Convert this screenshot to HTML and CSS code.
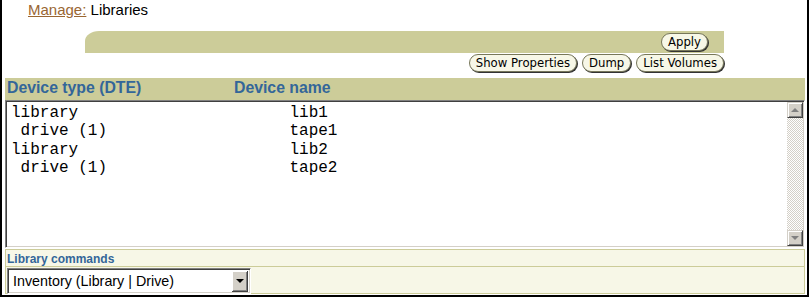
FILE: index.html
```html
<!DOCTYPE html>
<html lang="en">
<head>
    <meta charset="UTF-8">
    <title>Manage: Libraries</title>
    <link rel="stylesheet" href="styles.css">
</head>
<body>
    <div class="frame">
        <div class="title"><a href="#">Manage:</a> Libraries</div>

        <div class="apply-bar">
            <button class="btn">Apply</button>
        </div>
        <div class="actions">
            <button class="btn">Show Properties</button>
            <button class="btn">Dump</button>
            <button class="btn">List Volumes</button>
        </div>

        <div class="devices">
            <div class="col-head">
                <span class="col-type">Device type (DTE)</span>
                <span>Device name</span>
            </div>
            <div class="listbox">
                <div class="rows">
                    <div class="row">library                      lib1</div>
                    <div class="row"> drive (1)                   tape1</div>
                    <div class="row">library                      lib2</div>
                    <div class="row"> drive (1)                   tape2</div>
                </div>
                <div class="scrollbar">
                    <div class="sb-btn"><span class="arrow up"></span></div>
                    <div class="sb-track"></div>
                    <div class="sb-btn"><span class="arrow down"></span></div>
                </div>
            </div>
            <div class="cmd-label">Library commands</div>
            <div class="cmd-row">
                <div class="select">
                    <span class="select-text">Inventory (Library | Drive)</span>
                    <span class="select-btn"><span class="arrow down black"></span></span>
                </div>
            </div>
        </div>
    </div>
</body>
</html>
```

FILE: styles.css
```css
* {
    margin: 0;
    padding: 0;
    box-sizing: border-box;
}

body {
    background: #fff;
    font-family: "Liberation Sans", Arial, sans-serif;
}

.frame {
    width: 809px;
    height: 297px;
    border: 2px solid #000;
    border-top: none;
}

.title {
    height: 31px;
    padding: 1px 0 0 26px;
    font-size: 15px;
    color: #000;
}
.title a {
    color: #996633;
}

.apply-bar {
    display: flex;
    justify-content: flex-end;
    align-items: center;
    margin-left: 83px;
    width: 639px;
    height: 22px;
    padding-right: 16px;
    background: #cccc99;
    border-top-left-radius: 14px 10px;
}

.actions {
    display: flex;
    justify-content: flex-end;
    gap: 5px;
    width: 722px;
    height: 19px;
    padding-top: 1px;
}

.btn {
    height: 18px;
    padding: 0 6px;
    font-family: "DejaVu Sans", sans-serif;
    font-size: 11.7px;
    color: #000;
    background: #f7f7e7;
    border: 1px solid #77775a;
    border-radius: 9px;
    box-shadow: 1px 1px 0 #333;
}

.devices {
    margin: 6px 0 0 3px;
    width: 800px;
}

.col-head {
    display: flex;
    height: 22px;
    padding: 1px 0 0 2px;
    background: #cccc99;
    color: #336699;
    font-weight: bold;
    font-size: 15.8px;
}
.col-type {
    width: 227px;
}

.listbox {
    display: flex;
    height: 148px;
    border-top: 1px solid #808080;
    border-left: 1px solid #808080;
    border-right: 1px solid #fff;
    border-bottom: 1px solid #fff;
    box-shadow: inset 1px 1px 0 #404040, inset -1px -1px 0 #d4d0c8;
    background: #fff;
}
.rows {
    flex: 1;
    padding: 3px 0 0 5px;
}
.row {
    font-family: "Liberation Mono", "Courier New", monospace;
    font-size: 16px;
    line-height: 18.33px;
    white-space: pre;
    color: #000;
}

.scrollbar {
    display: flex;
    flex-direction: column;
    width: 16px;
    margin: 1px 1px 1px 0;
}
.sb-btn {
    display: flex;
    align-items: center;
    justify-content: center;
    height: 16px;
    background: #d4d0c8;
    border-top: 1px solid #d4d0c8;
    border-left: 1px solid #d4d0c8;
    border-right: 1px solid #404040;
    border-bottom: 1px solid #404040;
    box-shadow: inset 1px 1px 0 #fff, inset -1px -1px 0 #808080;
}
.sb-track {
    flex: 1;
    background: repeating-conic-gradient(#d4d0c8 0 25%, #fff 0 50%) 0 0 / 2px 2px;
}

.arrow {
    width: 0;
    height: 0;
    border-left: 4px solid transparent;
    border-right: 4px solid transparent;
}
.arrow.up {
    border-bottom: 4px solid #808080;
}
.arrow.down {
    border-top: 4px solid #808080;
}
.arrow.black {
    border-top-color: #000;
}

.cmd-label {
    height: 17px;
    margin-top: 1px;
    padding: 2px 0 0 1px;
    background: #f7f7e7;
    border: 1px solid #cccc99;
    border-bottom: none;
    color: #336699;
    font-weight: bold;
    font-size: 12px;
}

.cmd-row {
    height: 28px;
    padding: 1px 0 0 1px;
    background: #f7f7e7;
    border: 1px solid #cccc99;
}

.select {
    display: flex;
    align-items: center;
    width: 244px;
    height: 26px;
    background: #fff;
    border-top: 1px solid #808080;
    border-left: 1px solid #808080;
    border-right: 1px solid #fff;
    border-bottom: 1px solid #fff;
    box-shadow: inset 1px 1px 0 #404040, inset -1px -1px 0 #d4d0c8;
}
.select-text {
    flex: 1;
    padding-left: 5px;
    font-size: 14.3px;
    color: #000;
}
.select-btn {
    display: flex;
    align-items: center;
    justify-content: center;
    width: 16px;
    height: 21px;
    margin-right: 2px;
    background: #d4d0c8;
    border-right: 1px solid #404040;
    border-bottom: 1px solid #404040;
    box-shadow: inset 1px 1px 0 #fff, inset -1px -1px 0 #808080;
}
```
